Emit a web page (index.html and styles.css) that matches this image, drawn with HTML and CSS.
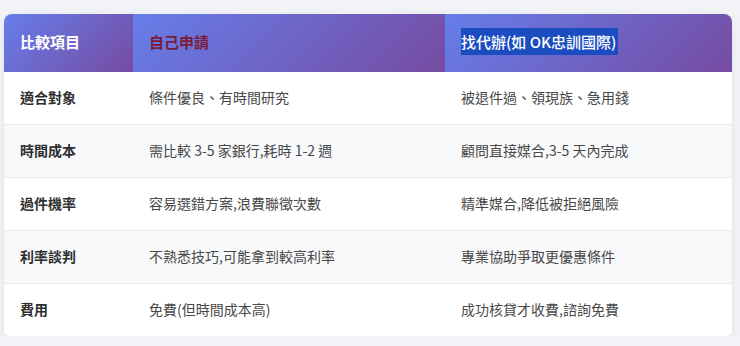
FILE: index.html
```html
<!DOCTYPE html>
<html lang="zh-Hant">
<head>
<meta charset="utf-8">
<title>比較項目</title>
<link rel="stylesheet" href="styles.css">
</head>
<body>
<div class="wrap">
  <table class="cmp">
    <colgroup>
      <col class="c1"><col class="c2"><col class="c3">
    </colgroup>
    <thead>
      <tr>
        <th>比較項目</th>
        <th class="red">自己申請</th>
        <th><span class="sel">找代辦(如 OK忠訓國際)</span></th>
      </tr>
    </thead>
    <tbody>
      <tr><td class="k">適合對象</td><td>條件優良、有時間研究</td><td>被退件過、領現族、急用錢</td></tr>
      <tr><td class="k">時間成本</td><td>需比較 3-5 家銀行,耗時 1-2 週</td><td>顧問直接媒合,3-5 天內完成</td></tr>
      <tr><td class="k">過件機率</td><td>容易選錯方案,浪費聯徵次數</td><td>精準媒合,降低被拒絕風險</td></tr>
      <tr><td class="k">利率談判</td><td>不熟悉技巧,可能拿到較高利率</td><td>專業協助爭取更優惠條件</td></tr>
      <tr><td class="k">費用</td><td>免費(但時間成本高)</td><td>成功核貸才收費,諮詢免費</td></tr>
    </tbody>
  </table>
</div>
</body>
</html>
```

FILE: styles.css
```css
html, body {
  margin: 0;
  padding: 0;
  background: #f2f3f7;
}
body {
  font-family: "Noto Sans CJK TC", "Noto Sans", sans-serif;
  color: #444;
}
.wrap {
  padding: 14px 8px 0 4px;
}
.cmp {
  width: 728px;
  border-collapse: separate;
  border-spacing: 0;
  table-layout: fixed;
  background: #fff;
  border-radius: 8px 8px 5px 5px;
  overflow: hidden;
  box-shadow: 0 2px 8px rgba(0, 0, 0, 0.08);
}
.c1 { width: 129px; }
.c2 { width: 312px; }
.c3 { width: 287px; }
.cmp th {
  background: linear-gradient(135deg, #667eea 0%, #764ba2 100%);
  color: #fff;
  font-size: 15px;
  font-weight: 700;
  text-align: left;
  padding: 14px 16px 16px;
  line-height: 28px;
  height: 28px;
}
.cmp th.red {
  color: #7a1c3c;
}
.sel {
  display: inline-block;
  background: #1b4dc1;
  color: #fff;
  line-height: 27px;
  font-weight: 500;
  padding-right: 2px;
}
.cmp td {
  font-size: 14px;
  line-height: 22px;
  padding: 14px 16px 16px;
  border-bottom: 1px solid #e8eaee;
  color: #484848;
}
.cmp tbody tr:nth-child(even) td {
  background: #f8f9fb;
}
.cmp tbody tr:last-child td {
  border-bottom: none;
}
.cmp td.k {
  font-weight: 700;
  color: #2f2f2f;
}
```
